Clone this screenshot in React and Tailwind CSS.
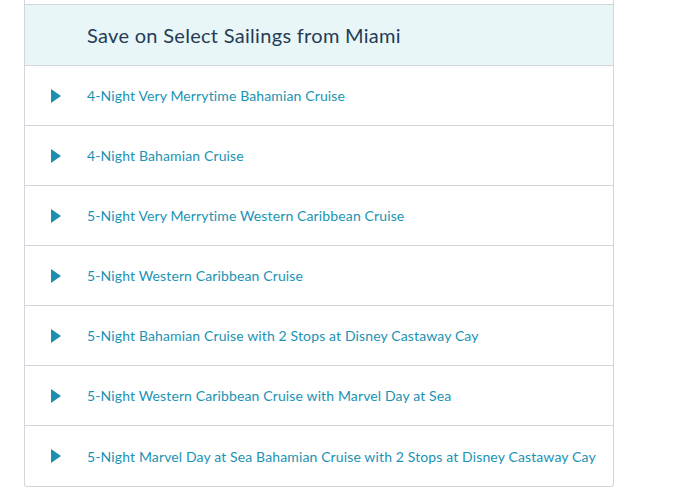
import React from "react";

const rows = [
  "4-Night Very Merrytime Bahamian Cruise",
  "4-Night Bahamian Cruise",
  "5-Night Very Merrytime Western Caribbean Cruise",
  "5-Night Western Caribbean Cruise",
  "5-Night Bahamian Cruise with 2 Stops at Disney Castaway Cay",
  "5-Night Western Caribbean Cruise with Marvel Day at Sea",
  "5-Night Marvel Day at Sea Bahamian Cruise with 2 Stops at Disney Castaway Cay",
];

export default function App() {
  return (
    <div className="w-[673px] h-[493px] bg-white" style={{ fontFamily: "Lato, 'Noto Sans', sans-serif" }}>
      <div className="ml-[24px] w-[590px] pt-[4px] border-x border-b border-[#d2d5db] rounded-b-[3px]">
        <div className="h-[62px] border-y border-[#d2d5db] bg-[#e8f6f8] flex items-center pl-[62px]">
          <span className="text-[20px] text-[#253b56] tracking-[0.3px]">Save on Select Sailings from Miami</span>
        </div>
        {rows.map((r, i) => (
          <div
            key={i}
            className={`h-[60px] flex items-center ${i < rows.length - 1 ? "border-b border-[#d2d5db]" : ""}`}
          >
            <svg width="10" height="14" viewBox="0 0 10 14" className="ml-[26px] mr-[26px] shrink-0">
              <path d="M0 0 L10 7 L0 14 Z" fill="#1a8fb0" />
            </svg>
            <span className="text-[14px] text-[#1a93b3] tracking-[0.13px]">{r}</span>
          </div>
        ))}
      </div>
    </div>
  );
}
